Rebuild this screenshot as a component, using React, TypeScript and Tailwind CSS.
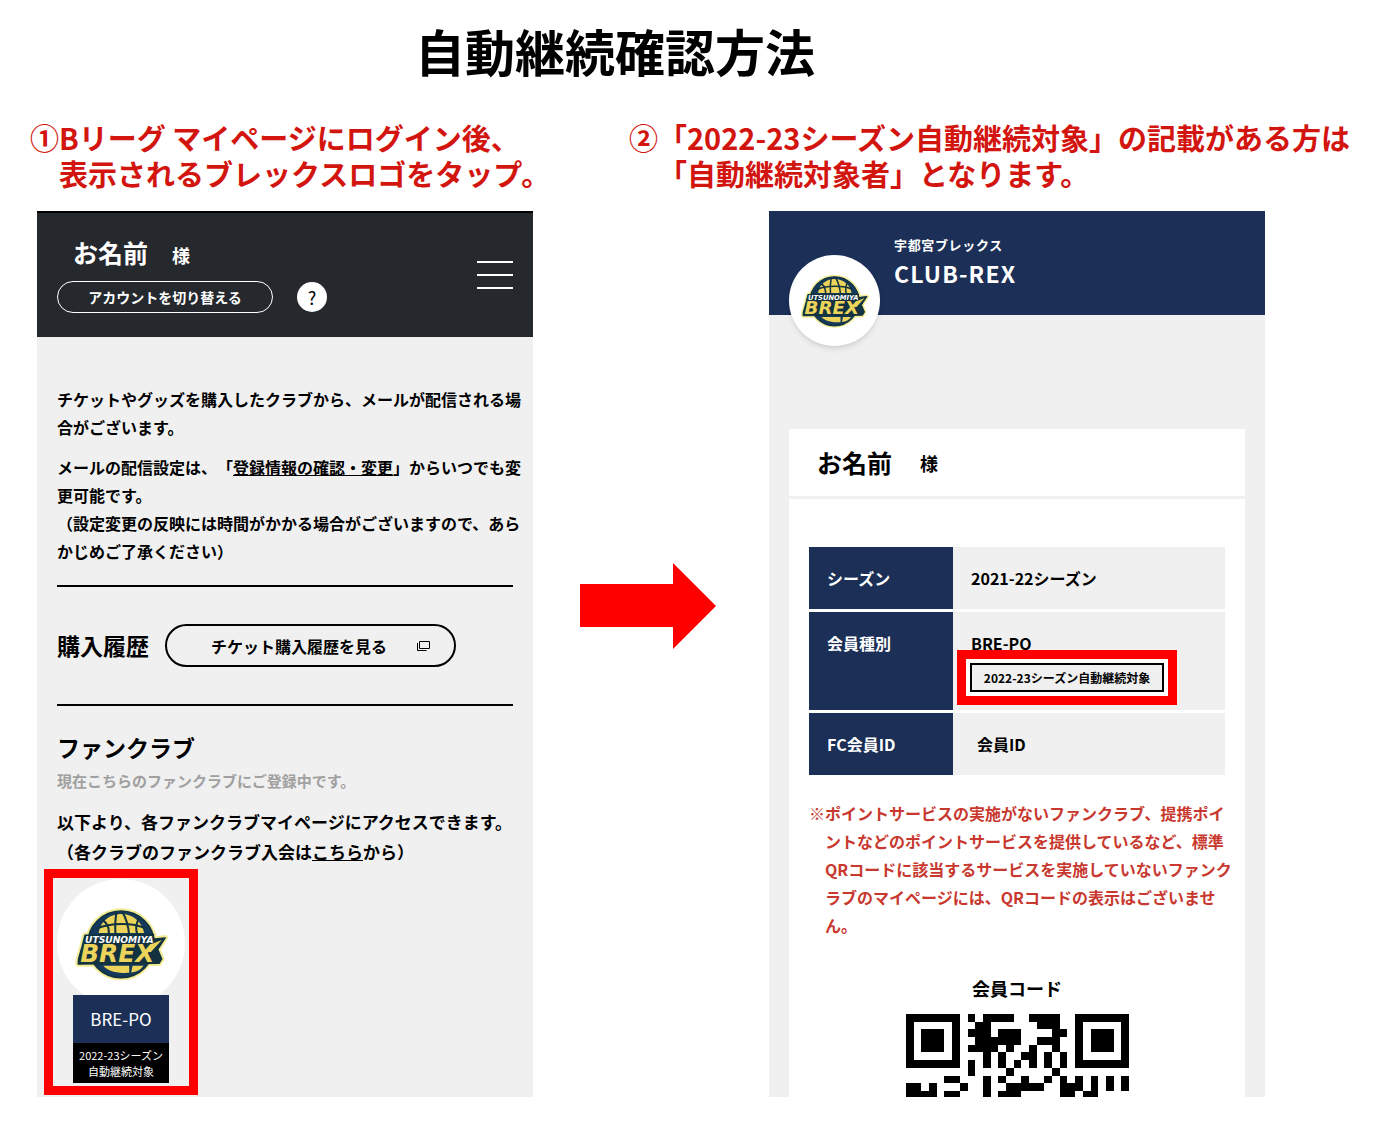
import { FC } from 'react';

const QR_MODULE = 10;

// '#' is a dark module
const qrRows = [
  '#######.#.####..####..#######',
  '#.....#..##......###..#.....#',
  '#.###.#.###.###....##.#.###.#',
  '#.###.#..######..###..#.###.#',
  '#.###.#.####.#..#..#..#.###.#',
  '#.....#...#.#..##.#.#.#.....#',
  '#######.#.#.#.#.#.#.#.#######',
  '........#....#.....#.........',
  '.....##...#.#..#..#.#.#.#.#.#',
  '##.#...#..#..#####..###.#.#.#',
  '####.##...#.###.....##.##....',
];

const qrModules = qrRows
  .flatMap((row, y) => row.split('').map((cell, x) => ({ x, y, dark: cell === '#' })))
  .filter((m) => m.dark);

const LOGO_BAND =
  'M44 118 L246 116 L243 130 L280 126 L258 160 L270 188 L262 201 L24 203 L25 188 L36 150 Z';

const BrexLogo: FC<{ className: string }> = ({ className }) => (
  <svg viewBox="0 0 300 285" className={className} role="img" aria-label="宇都宮ブレックス">
    <g fill="none" stroke="#f3ec94" strokeWidth="16" strokeLinejoin="round">
      <circle cx="150" cy="145" r="98" />
      <path d={LOGO_BAND} />
    </g>
    <circle cx="150" cy="145" r="98" fill="#14395a" stroke="#123240" strokeWidth="5" />
    <path d="M84 112 C90 74 120 56 150 56 C182 56 212 76 218 112 Z" fill="#ecd45a" />
    <path d="M98 208 H174 V229 C140 231 112 224 98 208 Z" fill="#ecd45a" />
    <path d="M184 208 H216 C208 220 196 226 180 228 Z" fill="#ecd45a" />
    <g fill="none" stroke="#123240" strokeWidth="6">
      <path d="M137 50 C133 70 132 92 134 118" />
      <path d="M154 50 C166 70 172 92 174 118" />
      <path d="M96 74 C112 84 116 98 114 118" />
      <path d="M204 68 C192 84 192 98 198 118" />
      <path d="M80 98 C118 82 184 80 222 98" />
    </g>
    <path d={LOGO_BAND} fill="#123240" stroke="#123240" strokeWidth="4" strokeLinejoin="round" />
    <text
      x="44"
      y="141"
      fontSize="27"
      fontWeight="700"
      fontStyle="italic"
      fill="#fff"
      fontFamily="DejaVu Sans, sans-serif"
    >
      UTSUNOMIYA
    </text>
    <text
      x="30"
      y="197"
      fontSize="73"
      fontWeight="700"
      fontStyle="italic"
      fill="#ecd45a"
      fontFamily="DejaVu Sans, sans-serif"
    >
      BREX
    </text>
    <path d="M238 145 L270 132 L238 168 L222 168 Z" fill="#ecd45a" />
  </svg>
);

const WindowIcon: FC = () => (
  <svg viewBox="0 0 14 12" className="h-3 w-3.5" fill="none" stroke="currentColor" aria-hidden="true">
    <path d="M3.5 1.5h10v7h-10z" />
    <path d="M1.5 3v7.5h9" />
  </svg>
);

const FlowArrow: FC = () => (
  <svg viewBox="0 0 136 86" className="mt-88 w-full" aria-hidden="true">
    <path d="M0 21h93V0l43 43-43 43V64H0z" fill="#fe0000" />
  </svg>
);

const MyPageScreen: FC = () => (
  <section className="flex flex-col bg-[#f0f0f0]">
    <header className="flex h-[126px] items-center justify-between border-t-2 border-black bg-[#25292e] px-5 text-white">
      <div className="pb-1">
        <p className="flex items-baseline gap-6 pl-4 font-bold">
          <span className="text-[25px] leading-9">お名前</span>
          <span className="text-lg leading-9">様</span>
        </p>
        <div className="mt-2 flex items-center gap-6">
          <button
            type="button"
            className="h-8 w-[216px] rounded-full border border-white text-sm font-bold"
          >
            アカウントを切り替える
          </button>
          <button
            type="button"
            className="h-[30px] w-[30px] rounded-full bg-white text-lg leading-none text-black"
          >
            ?
          </button>
        </div>
      </div>
      <button type="button" aria-label="メニュー" className="flex w-9 flex-col gap-[11px]">
        <span className="h-[2px] w-full bg-white" />
        <span className="h-[2px] w-full bg-white" />
        <span className="h-[2px] w-full bg-white" />
      </button>
    </header>

    <div className="pt-12 pr-2 pl-5 text-base leading-7 font-bold">
      <p>チケットやグッズを購入したクラブから、メールが配信される場合がございます。</p>
      <p className="mt-3">
        メールの配信設定は、「
        <a href="#account" className="underline">登録情報の確認・変更</a>
        」からいつでも変更可能です。
        <br />
        （設定変更の反映には時間がかかる場合がございますので、あらかじめご了承ください）
      </p>
    </div>

    <div className="mt-5 px-5">
      <div className="flex h-[121px] items-center gap-4 border-y-2 border-black">
        <h2 className="text-[23px] font-bold">購入履歴</h2>
        <a
          href="#tickets"
          className="flex h-[43px] w-[291px] items-center justify-between rounded-full border-2 border-black pr-6 pl-11 text-base font-bold"
        >
          チケット購入履歴を見る
          <WindowIcon />
        </a>
      </div>

      <h2 className="mt-[25px] text-[23px] leading-8 font-bold">ファンクラブ</h2>
      <p className="text-[15px] leading-9 font-bold text-[#a0a0a0]">
        現在こちらのファンクラブにご登録中です。
      </p>
      <p className="mt-2 text-[17px] leading-[30px] font-bold whitespace-nowrap">
        以下より、各ファンクラブマイページにアクセスできます。
        <br />
        （各クラブのファンクラブ入会は
        <a href="#join" className="underline">こちら</a>
        から）
      </p>
    </div>

    <a
      href="#club"
      className="mt-[2px] mb-[2px] ml-[7px] flex w-[154px] flex-col items-center border-[9px] border-[#fe0000] pt-px pb-[3px]"
    >
      <span className="-mb-3 flex h-[128px] w-[128px] items-center justify-center rounded-full bg-white">
        <BrexLogo className="w-[102px]" />
      </span>
      <span className="w-24 bg-[#1b2f57] text-center text-[17px] leading-[48px] text-white">BRE-PO</span>
      <span className="w-24 bg-black py-1 text-center text-[11px] leading-4 text-white">
        2022-23シーズン
        <br />
        自動継続対象
      </span>
    </a>
  </section>
);

const ClubScreen: FC = () => (
  <section className="flex flex-col bg-[#f0f0f0]">
    <header className="flex h-[104px] items-start gap-[14px] bg-[#1b2f57] px-5 text-white">
      <span className="mt-11 flex h-[91px] w-[91px] shrink-0 items-center justify-center rounded-full bg-white shadow-md">
        <BrexLogo className="w-[75px]" />
      </span>
      <div className="pt-6 font-bold">
        <p className="text-[13px] leading-5 tracking-wider">宇都宮ブレックス</p>
        <p className="text-[23px] leading-9 tracking-wider">CLUB-REX</p>
      </div>
    </header>

    <div className="mx-5 mt-[114px] flex-1 bg-white">
      <p className="flex h-[70px] items-center gap-7 border-b-[3px] border-[#f0f0f0] px-7 font-bold">
        <span className="text-[25px]">お名前</span>
        <span className="text-lg">様</span>
      </p>

      <div className="px-5 pt-12">
        <table className="w-full text-left text-base font-bold">
          <tbody>
            <tr className="h-[63px] border-b-[3px] border-white align-top">
              <th scope="row" className="w-36 bg-[#1b2f57] px-[18px] pt-[19px] text-white">シーズン</th>
              <td className="bg-[#f0f0f0] px-[18px] pt-[19px]">2021-22シーズン</td>
            </tr>
            <tr className="h-[101px] border-b-[3px] border-white align-top">
              <th scope="row" className="bg-[#1b2f57] px-[18px] pt-[19px] text-white">会員種別</th>
              <td className="bg-[#f0f0f0] pt-[19px]">
                <p className="px-[18px]">BRE-PO</p>
                <p className="relative -mt-[5px] ml-1 w-[220px] border-[9px] border-[#fe0000] bg-white p-1">
                  <span className="block border-2 border-black bg-[#f0f0f0] text-center text-xs leading-[25px]">
                    2022-23シーズン自動継続対象
                  </span>
                </p>
              </td>
            </tr>
            <tr className="h-16 align-top">
              <th scope="row" className="bg-[#1b2f57] px-[18px] pt-[19px] text-white">FC会員ID</th>
              <td className="bg-[#f0f0f0] px-6 pt-[19px]">会員ID</td>
            </tr>
          </tbody>
        </table>
      </div>

      <p className="mt-6 pr-3 pl-9 -indent-4 text-base leading-7 font-bold text-[#c8382e]">
        ※ポイントサービスの実施がないファンクラブ、提携ポイントなどのポイントサービスを提供しているなど、標準QRコードに該当するサービスを実施していないファンクラブのマイページには、QRコードの表示はございません。
      </p>

      <h2 className="mt-9 text-center text-lg leading-[26px] font-bold">会員コード</h2>
      <svg
        viewBox="0 0 290 108"
        className="mx-auto mt-[13px] w-[223px]"
        shapeRendering="crispEdges"
        role="img"
        aria-label="QRコード"
      >
        {qrModules.map(({ x, y }) => (
          <rect
            key={`${x}-${y}`}
            x={x * QR_MODULE}
            y={y * QR_MODULE}
            width={QR_MODULE}
            height={QR_MODULE}
          />
        ))}
      </svg>
    </div>
  </section>
);

const App: FC = () => {
  return (
    <main
      lang="ja"
      className="min-h-screen bg-white pb-7 font-['Noto_Sans_CJK_JP',sans-serif] text-black [text-spacing-trim:space-all]"
    >
      <h1 className="pt-3 pr-[150px] text-center text-[50px] leading-[76px] font-bold">
        自動継続確認方法
      </h1>

      <div className="mt-[31px] grid grid-cols-[599fr_751fr] pl-[30px] text-[29px] leading-9 font-bold whitespace-nowrap text-[#d3150f]">
        <h2>
          ①Bリーグ マイページにログイン後、
          <br />
          <span className="pl-[29px]">表示されるブレックスロゴをタップ。</span>
        </h2>
        <h2>
          ②「2022-23シーズン自動継続対象」の記載がある方は
          <br />
          <span className="pl-[29px]">「自動継続対象者」となります。</span>
        </h2>
      </div>

      <div className="mt-5 grid grid-cols-[1fr_236px_1fr] pr-[115px] pl-[37px]">
        <MyPageScreen />
        <div className="pr-[53px] pl-[47px]">
          <FlowArrow />
        </div>
        <ClubScreen />
      </div>
    </main>
  );
};

export default App;
